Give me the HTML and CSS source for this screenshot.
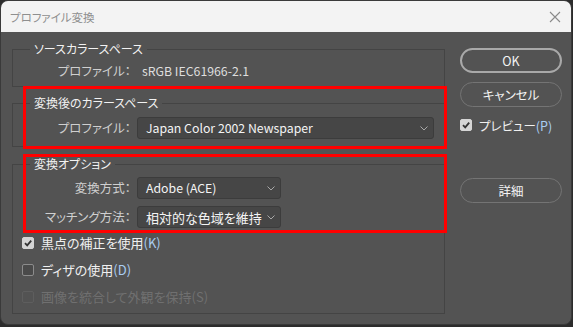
FILE: index.html
```html
<!DOCTYPE html>
<html lang="ja">
<head>
<meta charset="utf-8">
<link rel="stylesheet" href="styles.css">
</head>
<body>
<div class="window">
  <div class="titlebar">
    <span class="title">プロファイル変換</span>
    <svg class="close" width="12" height="12" viewBox="0 0 12 12"><path d="M1 1 L11 11 M11 1 L1 11" stroke="#8a8a8a" stroke-width="1.1" fill="none"/></svg>
  </div>
  <div class="content">
    <div class="left">
      <fieldset class="group g1">
        <legend>ソースカラースペース</legend>
        <div class="grid">
          <span class="label">プロファイル：</span>
          <span class="value lat">sRGB IEC61966-2.1</span>
        </div>
      </fieldset>
      <fieldset class="group g2">
        <legend>変換後のカラースペース</legend>
        <div class="grid">
          <span class="label">プロファイル：</span>
          <div class="select wide"><span class="lat">Japan Color 2002 Newspaper</span><svg class="chev" width="8" height="5" viewBox="0 0 8 5"><path d="M0.5 0.5 L4 4 L7.5 0.5" stroke="#a8a8a8" fill="none"/></svg></div>
        </div>
      </fieldset>
      <fieldset class="group g3">
        <legend>変換オプション</legend>
        <div class="grid rows">
          <span class="label">変換方式：</span>
          <div class="select narrow"><span class="lat">Adobe (ACE)</span><svg class="chev" width="8" height="5" viewBox="0 0 8 5"><path d="M0.5 0.5 L4 4 L7.5 0.5" stroke="#a8a8a8" fill="none"/></svg></div>
          <span class="label">マッチング方法：</span>
          <div class="select narrow"><span>相対的な色域を維持</span><svg class="chev" width="8" height="5" viewBox="0 0 8 5"><path d="M0.5 0.5 L4 4 L7.5 0.5" stroke="#a8a8a8" fill="none"/></svg></div>
        </div>
        <div class="checks">
          <div class="check"><span class="box on"><svg width="10" height="10" viewBox="0 0 10 10"><path d="M2 5.2 L4.2 7.4 L8.2 2.6" stroke="#333" stroke-width="1.8" fill="none"/></svg></span><span>黒点の補正を使用<span class="key">(K)</span></span></div>
          <div class="check"><span class="box"></span><span>ディザの使用<span class="key">(D)</span></span></div>
          <div class="check disabled"><span class="box"></span><span>画像を統合して外観を保持(S)</span></div>
        </div>
      </fieldset>
    </div>
    <div class="right">
      <button class="btn primary">OK</button>
      <button class="btn">キャンセル</button>
      <div class="check preview"><span class="box on"><svg width="10" height="10" viewBox="0 0 10 10"><path d="M2 5.2 L4.2 7.4 L8.2 2.6" stroke="#333" stroke-width="1.8" fill="none"/></svg></span><span class="kana">プレビュー<span class="key">(P)</span></span></div>
      <button class="btn detail">詳細</button>
    </div>
  </div>
  <div class="mark m1"></div>
  <div class="mark m2"></div>
</div>
</body>
</html>
```
FILE: styles.css
```css
* { box-sizing: border-box; }
html, body { margin: 0; padding: 0; }
body {
  background: #2c2c2c;
  width: 573px;
  height: 327px;
  font-family: "Noto Sans CJK JP", "Noto Sans", sans-serif;
  font-feature-settings: "palt";
  font-size: 13px;
  color: #ececec;
}
.window {
  position: relative;
  width: 572px;
  height: 325px;
  background: #535353;
  border: 1px solid #3a3a3a;
  border-radius: 8px;
  overflow: hidden;
}
.titlebar {
  height: 31px;
  background: #f3f3f3;
  display: flex;
  align-items: center;
  justify-content: space-between;
  padding: 0 10px 0 9px;
}
.title {
  font-size: 11.5px;
  color: #8f8f8f;
}
.content {
  display: flex;
  padding: 9px 0 0 11px;
}
.left { width: 433px; }
.group {
  margin: 0;
  padding: 0;
  border: 1px solid #444444;
  min-width: 0;
}
.group legend {
  margin-left: 17px;
  padding: 0 4px;
  font-size: 12px;
  line-height: 16px;
  color: #f2f2f2;
}
.g1 { height: 46px; }
.g2 { height: 52px; margin-top: 8px; }
.g3 { height: 158px; margin-top: 9px; }
.grid {
  display: grid;
  grid-template-columns: 118px auto;
  column-gap: 6px;
  align-items: center;
  justify-items: start;
}
.g1 .grid { height: 28px; }
.g2 .grid { padding-top: 6px; }
.g3 .grid { padding-top: 5px; row-gap: 7px; }
.label {
  justify-self: end;
  color: #cfcfcf;
  line-height: 16px;
  font-size: 12.5px;
}
.value {
  padding-left: 5px;
  color: #dedede;
}
.lat { font-size: 12.3px; }
.select {
  height: 22px;
  background: #464646;
  border: 1px solid #3c3c3c;
  border-radius: 3px;
  display: flex;
  align-items: center;
  justify-content: space-between;
  padding: 0 5px 0 8px;
  color: #f4f4f4;
}
.wide { width: 297px; }
.narrow { width: 144px; }
.chev { flex: none; }
.checks {
  padding: 1px 0 0 9px;
}
.check {
  height: 27px;
  display: flex;
  align-items: center;
  gap: 7px;
  color: #f0f0f0;
}
.box {
  width: 12px;
  height: 12px;
  border: 1px solid #8c8c8c;
  border-radius: 2px;
  background: #4a4a4a;
  display: flex;
  align-items: center;
  justify-content: center;
}
.box.on {
  background: #d5d5d5;
  border-color: #d5d5d5;
}
.key { color: #a9cdf2; }
.disabled { color: #707070; }
.disabled .box { border-color: #5e5e5e; background: #535353; }
.right {
  margin-left: 15px;
  padding-top: 7px;
  width: 102px;
  display: flex;
  flex-direction: column;
}
.btn {
  width: 102px;
  height: 25px;
  border-radius: 13px;
  border: 1px solid #747474;
  background: transparent;
  color: #f4f4f4;
  font-family: inherit;
  font-feature-settings: "palt";
  font-size: 12.5px;
  padding: 0;
}
.btn.primary { border: 2px solid #a9a9a9; }
.btn + .btn { margin-top: 9px; }
.preview { height: 18px; margin-top: 9px; gap: 7px; }
.kana { font-size: 12.5px; }
.btn.detail { margin-top: 44px; }
.mark {
  position: absolute;
  left: 22px;
  width: 424px;
  border: 3px solid #ff0000;
}
.m1 { top: 85px; height: 63px; }
.m2 { top: 153px; height: 79px; }
```
